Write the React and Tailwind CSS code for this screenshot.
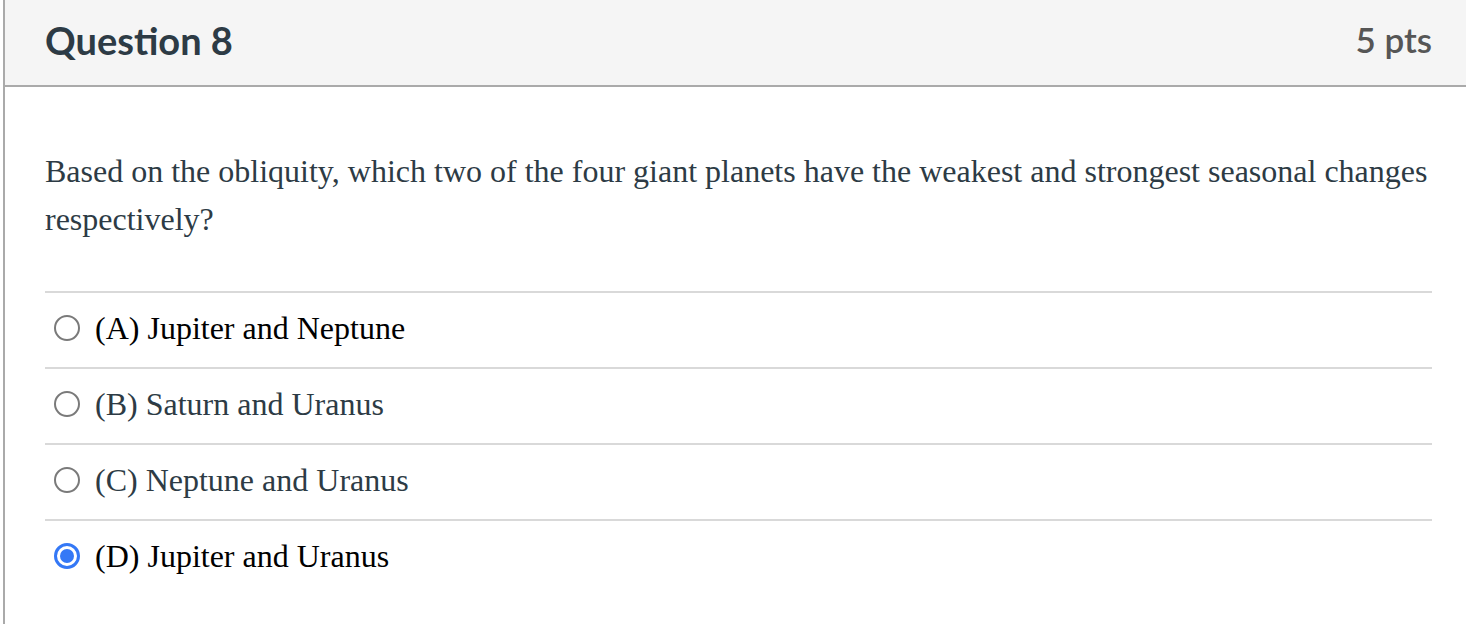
import { useState } from "react";

const options = [
  { id: "A", label: "(A) Jupiter and Neptune", color: "text-black" },
  { id: "B", label: "(B) Saturn and Uranus", color: "text-[#2d3b45]" },
  { id: "C", label: "(C) Neptune and Uranus", color: "text-[#2d3b45]" },
  { id: "D", label: "(D) Jupiter and Uranus", color: "text-black" },
];

function Radio({ checked }) {
  if (checked) {
    return (
      <span className="w-[26px] h-[26px] rounded-full border-[3px] border-[#3478f6] bg-white flex items-center justify-center shrink-0">
        <span className="w-[14px] h-[14px] rounded-full bg-[#3478f6]" />
      </span>
    );
  }
  return <span className="w-[26px] h-[26px] rounded-full border-2 border-[#7a7a7a] bg-white shrink-0" />;
}

function App() {
  const [answer, setAnswer] = useState("D");

  return (
    <div className="w-full min-h-screen bg-white">
      <div className="ml-[3px] min-h-[624px] border-l-2 border-[#aaaaaa]">
        {/* header */}
        <div className="h-[87px] bg-[#f5f5f5] border-b-2 border-[#aaaaaa] flex items-center justify-between pl-[40px] pr-[34px] pb-[6px]">
          <h2 className="font-['Lato',sans-serif] font-bold text-[38px] text-[#2d3b45] leading-none">Question 8</h2>
          <span className="font-['Lato',sans-serif] font-semibold text-[35px] text-[#565656] leading-none">5 pts</span>
        </div>

        {/* body */}
        <div className="pl-[40px] pr-[34px] pt-[60px]">
          <p className="font-['Liberation_Serif','Times_New_Roman',serif] text-[32px] leading-[48px] text-[#2d3b45]">
            Based on the obliquity, which two of the four giant planets have the weakest and strongest seasonal changes
            respectively?
          </p>

          <div className="mt-[48px]">
            {options.map((o) => (
              <label
                key={o.id}
                onClick={() => setAnswer(o.id)}
                className="flex items-center h-[76px] pb-[4px] border-t-2 border-[#d9d9d9] cursor-pointer"
              >
                <span className="ml-[9px] mr-[15px] flex">
                  <Radio checked={answer === o.id} />
                </span>
                <span className={`font-['Liberation_Serif','Times_New_Roman',serif] text-[32px] leading-[48px] ${o.color}`}>
                  {o.label}
                </span>
              </label>
            ))}
          </div>
        </div>
      </div>
    </div>
  );
}

export default App;
